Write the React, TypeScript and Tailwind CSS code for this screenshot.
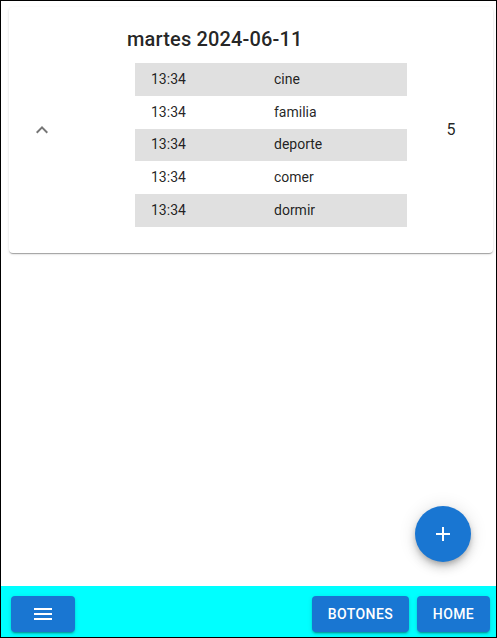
import React from 'react';

const rows = [
  { time: '13:34', label: 'cine' },
  { time: '13:34', label: 'familia' },
  { time: '13:34', label: 'deporte' },
  { time: '13:34', label: 'comer' },
  { time: '13:34', label: 'dormir' },
];

function Icon({ d, className }: { d: string; className?: string }) {
  return (
    <svg viewBox="0 0 24 24" className={className} fill="currentColor">
      <path d={d} />
    </svg>
  );
}

export default function App() {
  return (
    <div className="relative flex h-[638px] w-[497px] flex-col border border-black bg-white font-['Roboto',sans-serif] text-[rgba(0,0,0,0.87)]">
      <div className="flex-1">
        {/* tarjeta del día */}
        <div className="ml-[8px] mt-[6px] flex h-[246px] w-[484px] rounded-[4px] bg-white shadow-[0_2px_1px_-1px_rgba(0,0,0,0.2),0_1px_1px_0_rgba(0,0,0,0.14),0_1px_3px_0_rgba(0,0,0,0.12)]">
          <div className="flex w-[66px] items-center justify-center">
            <Icon d="M12 8l-6 6 1.41 1.41L12 10.83l4.59 4.58L18 14z" className="h-6 w-6 text-[rgba(0,0,0,0.54)]" />
          </div>
          <div className="ml-[52px] flex w-[280px] flex-col pt-[18px]">
            <h2 className="mb-[10px] text-[20px] font-medium leading-[28px] tracking-[0.15px]">martes 2024-06-11</h2>
            <div className="ml-[8px] w-[272px] text-[14px]">
              {rows.map((r, i) => (
                <div key={r.label} className={`flex h-[32.8px] items-center ${i % 2 === 0 ? 'bg-[#e0e0e0]' : 'bg-white'}`}>
                  <div className="w-[139px] px-4">{r.time}</div>
                  <div>{r.label}</div>
                </div>
              ))}
            </div>
          </div>
          <div className="flex flex-1 items-center justify-center pl-[2px] text-[16px]">5</div>
        </div>
      </div>

      {/* botón flotante */}
      <button className="absolute bottom-[75px] right-[25px] flex h-14 w-14 items-center justify-center rounded-full bg-[#1976d2] text-white shadow-[0_3px_5px_-1px_rgba(0,0,0,0.2),0_6px_10px_0_rgba(0,0,0,0.14),0_1px_18px_0_rgba(0,0,0,0.12)]">
        <Icon d="M19 13h-6v6h-2v-6H5v-2h6V5h2v6h6v2z" className="h-6 w-6" />
      </button>

      {/* barra inferior */}
      <div className="flex h-[51px] items-start bg-[#00ffff] px-[10px] pt-[10px]">
        <button className="flex h-9 w-16 items-center justify-center rounded-[4px] bg-[#1976d2] text-white shadow-[0_3px_1px_-2px_rgba(0,0,0,0.2),0_2px_2px_0_rgba(0,0,0,0.14),0_1px_5px_0_rgba(0,0,0,0.12)]">
          <Icon d="M3 18h18v-2H3v2zm0-5h18v-2H3v2zm0-7v2h18V6H3z" className="h-6 w-6" />
        </button>
        <div className="ml-auto mr-[-4px] flex gap-2">
          <button className="h-9 w-[97px] rounded-[4px] bg-[#1976d2] text-[14px] font-medium uppercase tracking-[0.4px] text-white shadow-[0_3px_1px_-2px_rgba(0,0,0,0.2),0_2px_2px_0_rgba(0,0,0,0.14),0_1px_5px_0_rgba(0,0,0,0.12)]">
            Botones
          </button>
          <button className="h-9 w-[73px] rounded-[4px] bg-[#1976d2] text-[14px] font-medium uppercase tracking-[0.4px] text-white shadow-[0_3px_1px_-2px_rgba(0,0,0,0.2),0_2px_2px_0_rgba(0,0,0,0.14),0_1px_5px_0_rgba(0,0,0,0.12)]">
            Home
          </button>
        </div>
      </div>
    </div>
  );
}
